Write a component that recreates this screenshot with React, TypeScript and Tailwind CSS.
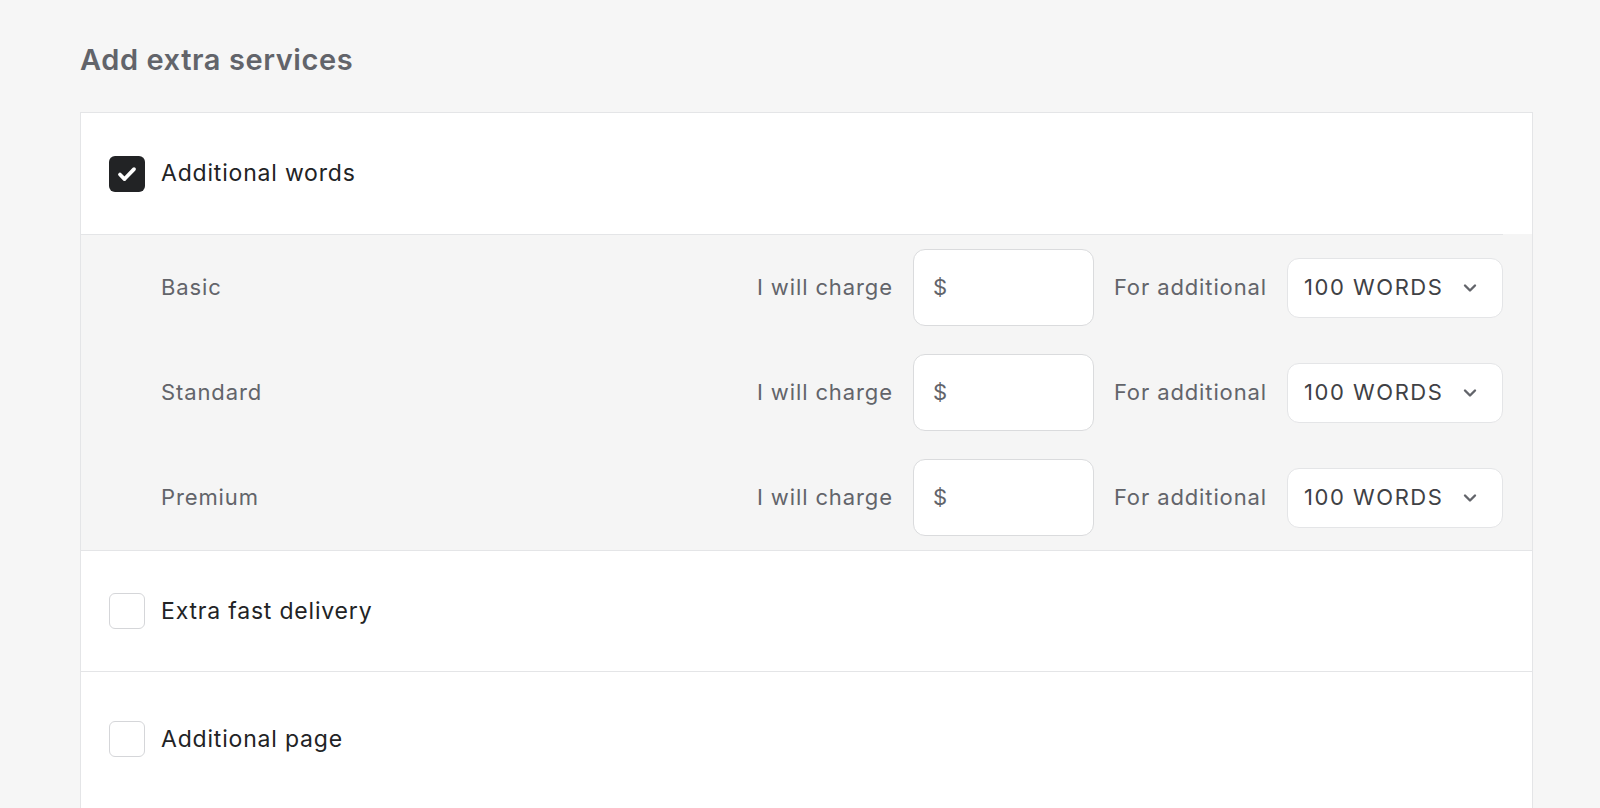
import { useState } from "react";

const tiers = ["Basic", "Standard", "Premium"];

function Check({ on }: { on: boolean }) {
  return on ? (
    <span className="w-9 h-9 shrink-0 rounded-[6px] bg-[#222325] flex items-center justify-center">
      <svg width="26" height="26" viewBox="0 0 24 24" fill="none">
        <path d="M5.5 12.5l4.2 4.2L18.5 7.5" stroke="#fff" strokeWidth="3.4" strokeLinecap="round" strokeLinejoin="round" />
      </svg>
    </span>
  ) : (
    <span className="w-9 h-9 shrink-0 rounded-[6px] bg-white border border-[#d5d6d9]" />
  );
}

function TierRow({ name }: { name: string }) {
  return (
    <div className="flex items-center py-[14px] pl-[80px] pr-[29px] text-[22px] tracking-[0.04em] text-[#62646a]">
      <span className="flex-1">{name}</span>
      <span>I will charge</span>
      <div className="ml-5 w-[181px] h-[77px] rounded-[12px] bg-white border border-[#dadbdd] flex items-center px-[19px]">
        $
      </div>
      <span className="ml-5">For additional</span>
      <div className="ml-5 w-[216px] h-[60px] rounded-[12px] bg-white border border-[#e4e5e7] flex items-center justify-between pl-4 pr-[22px] text-[#404145] tracking-[0.07em]">
        100 WORDS
        <svg width="20" height="20" viewBox="0 0 20 20" fill="none">
          <path d="M5 7.5l5 5 5-5" stroke="#62646a" strokeWidth="2.4" strokeLinecap="round" strokeLinejoin="round" />
        </svg>
      </div>
    </div>
  );
}

export default function App() {
  const [checked] = useState({ words: true, fast: false, page: false });

  return (
    <div className="bg-[#f6f6f6] pl-[80px] pr-[67px] pt-[42px] font-['Inter',sans-serif] h-[808px] overflow-hidden">
      <h2 className="text-[29px] font-semibold tracking-[0.02em] text-[#62646a] leading-[36px]">Add extra services</h2>

      <div className="mt-[34px] bg-white border border-[#e4e5e7]">
        {/* Additional words */}
        <div className="flex items-center gap-4 px-7 h-[121px]">
          <Check on={checked.words} />
          <span className="text-[23px] tracking-[0.035em] text-[#222325]">Additional words</span>
        </div>
        <div className="bg-[#f5f5f5]">
          <div className="border-t border-[#e4e5e7] mr-[29px]" />
          {tiers.map((t) => (
            <TierRow key={t} name={t} />
          ))}
        </div>

        {/* Extra fast delivery */}
        <div className="flex items-center gap-4 px-7 h-[121px] border-t border-[#e4e5e7]">
          <Check on={checked.fast} />
          <span className="text-[23px] tracking-[0.035em] text-[#222325]">Extra fast delivery</span>
        </div>

        {/* Additional page */}
        <div className="flex items-start gap-4 px-7 pt-[49px] h-[160px] border-t border-[#e4e5e7]">
          <Check on={checked.page} />
          <span className="text-[23px] tracking-[0.035em] text-[#222325] leading-9">Additional page</span>
        </div>
      </div>
    </div>
  );
}
